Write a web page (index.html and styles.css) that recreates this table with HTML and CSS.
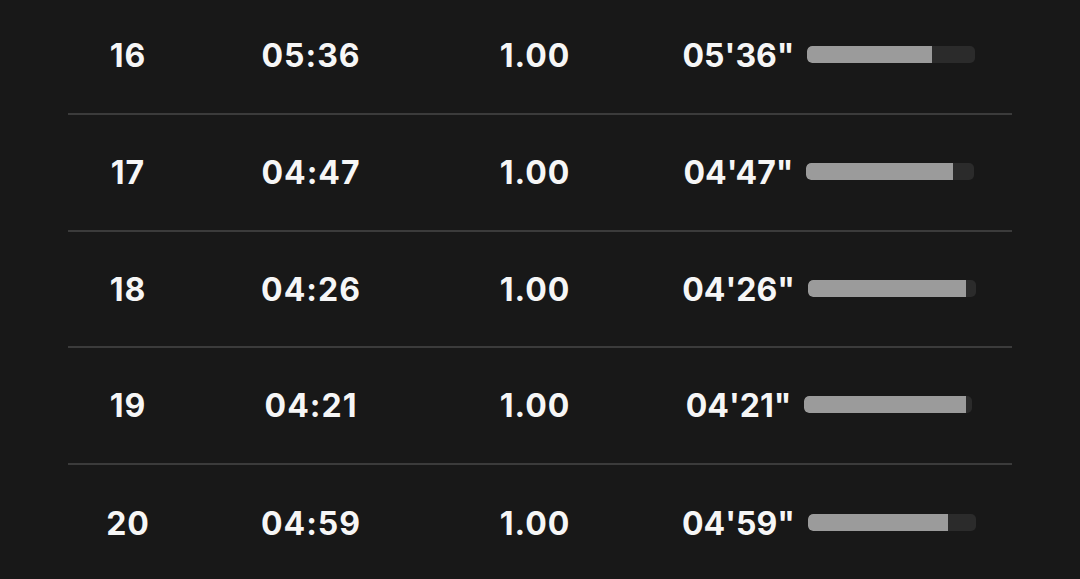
FILE: index.html
```html
<!DOCTYPE html>
<html lang="en">
  <head>
    <meta charset="UTF-8" />
    <meta name="viewport" content="width=device-width, initial-scale=1.0" />
    <title>Laps</title>
    <link rel="stylesheet" href="styles.css">
  </head>
  <body>
    <div class="laps">
      <div class="lap">
        <span class="num">16</span>
        <span class="time">05:36</span>
        <span class="dist">1.00</span>
        <div class="pace">
          <span class="pace-txt">05'36"</span>
          <div class="bar"><div class="fill" style="width: 74%"></div></div>
        </div>
      </div>
      <div class="lap">
        <span class="num">17</span>
        <span class="time">04:47</span>
        <span class="dist">1.00</span>
        <div class="pace">
          <span class="pace-txt">04'47"</span>
          <div class="bar"><div class="fill" style="width: 87.5%"></div></div>
        </div>
      </div>
      <div class="lap">
        <span class="num">18</span>
        <span class="time">04:26</span>
        <span class="dist">1.00</span>
        <div class="pace">
          <span class="pace-txt">04'26"</span>
          <div class="bar"><div class="fill" style="width: 94%"></div></div>
        </div>
      </div>
      <div class="lap">
        <span class="num">19</span>
        <span class="time">04:21</span>
        <span class="dist">1.00</span>
        <div class="pace">
          <span class="pace-txt">04'21"</span>
          <div class="bar"><div class="fill" style="width: 96%"></div></div>
        </div>
      </div>
      <div class="lap">
        <span class="num">20</span>
        <span class="time">04:59</span>
        <span class="dist">1.00</span>
        <div class="pace">
          <span class="pace-txt">04'59"</span>
          <div class="bar"><div class="fill" style="width: 83.5%"></div></div>
        </div>
      </div>
    </div>
  </body>
</html>
```

FILE: styles.css
```css
body {
  margin: 0;
  background: #181818;
  color: #f6f6f6;
  font-family: Inter, "Noto Sans", sans-serif;
  font-weight: 700;
}
.laps {
  margin: -1.6px 68px 0;
  display: flex;
  flex-direction: column;
}
.lap {
  box-sizing: border-box;
  display: grid;
  grid-template-columns: 120px 246px 202px 1fr;
  align-items: center;
  height: 116.67px;
  padding-bottom: 1.5px;
  border-bottom: 2px solid #3b3b3b;
  font-size: 32px;
  line-height: 1;
  letter-spacing: 1px;
}
.lap:last-child {
  border-bottom: none;
}
.num,
.time,
.dist,
.pace-txt {
  padding-top: 3px;
}
.num,
.time,
.dist {
  text-align: center;
}
.pace {
  display: flex;
  justify-content: center;
  align-items: center;
  padding-left: 10px;
  gap: 13px;
}
.pace-txt {
  letter-spacing: 0;
}
.bar {
  width: 168px;
  height: 17px;
  border-radius: 5px;
  background: #2b2b2b;
  overflow: hidden;
}
.fill {
  height: 100%;
  background: #9b9b9b;
  border-radius: 5px 0 0 5px;
}
```
